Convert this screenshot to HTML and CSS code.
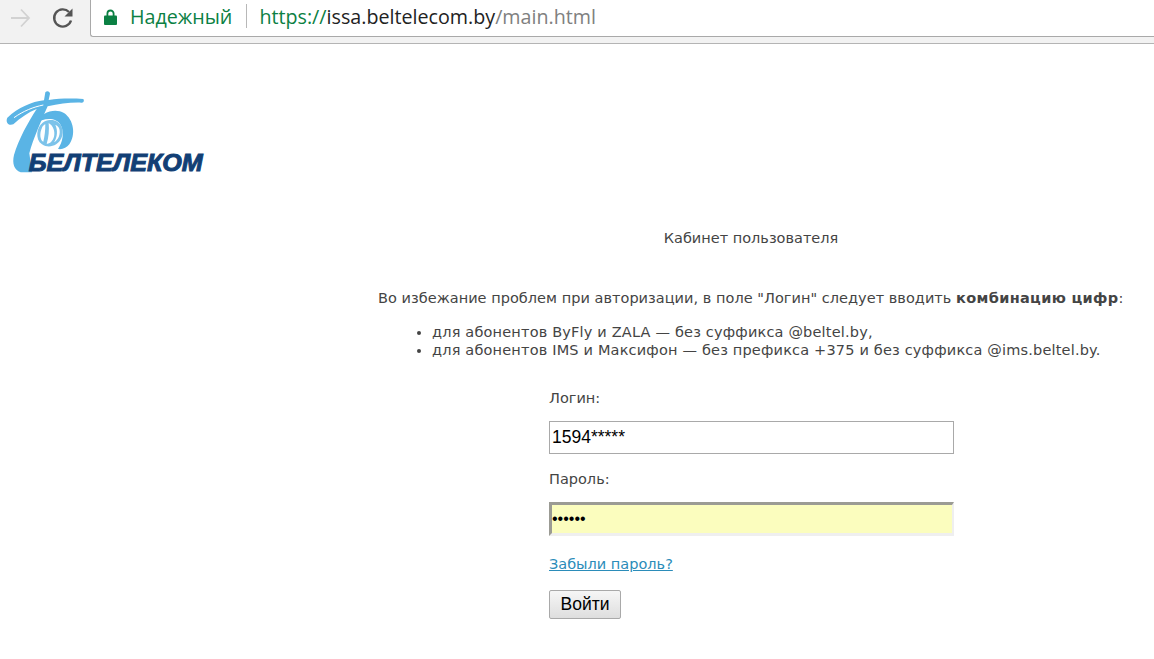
FILE: index.html
```html
<!DOCTYPE html>
<html lang="ru">
<head>
<meta charset="utf-8">
<title>Кабинет пользователя</title>
<link rel="stylesheet" href="styles.css">
</head>
<body>
<header class="toolbar">
  <div class="nav">
    <svg class="ico-forward" viewBox="0 0 24 24" width="24" height="24"><path d="M3 12H21M13 3.5L21 12L13 20.5" fill="none" stroke="#d2d2d2" stroke-width="1.8"/></svg>
    <svg class="ico-reload" viewBox="0 0 24 24" width="24" height="24"><path d="M20 14.5A8.6 8.6 0 1 1 18 6" fill="none" stroke="#555" stroke-width="2.4"/><path d="M21.5 2.5V10.5H13.5Z" fill="#555"/></svg>
  </div>
  <div class="omnibox">
    <svg class="ico-lock" viewBox="0 0 13 16" width="13" height="16"><path d="M3.4 8V4.6a3.1 3.1 0 0 1 6.2 0V8" fill="none" stroke="#0b8043" stroke-width="1.8"/><rect x="0" y="6.5" width="13" height="9.5" rx="1" fill="#0b8043"/></svg>
    <span class="secure">Надежный</span>
    <span class="sep"></span>
    <span class="url"><span class="scheme">https://</span><span class="host">issa.beltelecom.by</span><span class="path">/main.html</span></span>
  </div>
</header>

<div class="logo">
  <svg viewBox="0 0 645 300" width="215" height="100">
    <g fill="#5ab4e5">
      <path d="M22 98C55 68 95 50 132 46L136 22C140 16 150 18 150 26L146 45C180 40 215 40 250 42C254 48 250 54 244 53C210 52 178 56 143 64C125 105 100 160 88 205L96 262L62 262C42 255 36 235 42 210C55 165 85 110 110 72C85 82 62 98 40 118C24 124 16 110 22 98Z"/>
      <path d="M105 116C125 80 165 68 192 84C222 104 228 150 208 178C200 188 188 194 174 192C188 172 194 142 182 120C168 96 132 98 105 116Z"/>
    </g>
    <path fill="#7cc3ea" d="M150 105C182 103 196 135 184 160C174 182 146 192 126 178C104 162 110 126 128 113C135 108 142 106 150 105ZM126 128C118 145 120 165 130 170C134 155 136 135 136 118C131 120 128 124 126 128ZM146 114C148 135 146 158 140 176C150 176 158 168 162 155C166 140 160 122 146 114ZM166 120C174 135 172 158 162 172C176 165 182 145 178 132C176 126 172 122 166 120Z"/>
    <path d="M42 98C70 78 100 66 130 60" fill="none" stroke="#fff" stroke-width="3"/>
    <text class="logo-text" x="86" y="257" textLength="522" lengthAdjust="spacingAndGlyphs">БЕЛТЕЛЕКОМ</text>
  </svg>
</div>

<main class="content">
  <h1 class="title">Кабинет пользователя</h1>
  <p class="intro">Во избежание проблем при авторизации, в поле "Логин" следует вводить <b>комбинацию цифр</b>:</p>
  <ul class="notes">
    <li>для абонентов ByFly и ZALA — без суффикса @beltel.by,</li>
    <li>для абонентов IMS и Максифон — без префикса +375 и без суффикса @ims.beltel.by.</li>
  </ul>
  <form class="login">
    <label class="field-label" for="login">Логин:</label>
    <input class="input" id="login" type="text" value="1594*****">
    <label class="field-label" for="password">Пароль:</label>
    <input class="input input-filled" id="password" type="password" value="123456">
    <a class="forgot" href="#">Забыли пароль?</a>
    <button class="submit" type="button">Войти</button>
  </form>
</main>
</body>
</html>
```
FILE: styles.css
```css
html, body { margin: 0; padding: 0; background: #fff; }
body {
  width: 1154px;
  height: 659px;
  overflow: hidden;
  font-family: "DejaVu Sans", Verdana, sans-serif;
  font-size: 14.5px;
  color: #444;
}
.toolbar {
  display: flex;
  height: 43px;
  box-sizing: content-box;
  background: #f2f2f2;
  border-bottom: 1px solid #b4b4b4;
  align-items: flex-start;
}
.nav {
  width: 90px;
  height: 36px;
  flex: none;
  display: flex;
  align-items: center;
  gap: 19px;
  padding-left: 8px;
  box-sizing: border-box;
}
.omnibox {
  flex: 1;
  height: 37px;
  box-sizing: border-box;
  background: #fff;
  border: 1px solid #a9a9a9;
  border-top: 0;
  border-right: 0;
  border-bottom-left-radius: 3px;
  display: flex;
  align-items: center;
  padding: 0 0 4px 13px;
  font-family: "Open Sans", "Noto Sans", sans-serif;
  font-size: 19.7px;
  white-space: nowrap;
}
.secure { color: #0b8043; margin-left: 8px; }
.ico-lock { margin-top: 2px; margin-right: 5px; }
.sep { width: 1px; height: 24px; background: #b8b8b8; margin: 0 12px 0 14px; }
.scheme { color: #0b8043; }
.host { color: #222; }
.path { color: #808080; }
.logo { padding: 41px 0 0 0; height: 100px; }
.logo svg { display: block; }
.logo-text {
  font-family: "Liberation Sans", Arial, sans-serif;
  font-weight: 700;
  font-style: italic;
  font-size: 74px;
  fill: #123f75;
  stroke: #123f75;
  stroke-width: 3px;
}
.content { margin-left: 378px; width: 746px; }
.title {
  margin: 44px 0 0;
  font-size: inherit;
  font-weight: 400;
  text-align: center;
  line-height: 18px;
}
.intro { margin: 42px 0 0; line-height: 18px; white-space: nowrap; letter-spacing: 0.03px; }
.intro b { letter-spacing: 0.33px; }
.notes {
  margin: 16px 0 0;
  padding: 0 0 0 54px;
  line-height: 18px;
  white-space: nowrap;
  letter-spacing: 0.18px;
}
.login {
  display: flex;
  flex-direction: column;
  align-items: flex-start;
  margin: 30px 0 0 171px;
}
.field-label { line-height: 18px; }
.input {
  box-sizing: border-box;
  width: 405px;
  height: 33px;
  margin: 14px 0 16px;
  padding: 2px 2px;
  border: 1px solid #a9a9a9;
  background: #fff;
  color: #000;
  font-family: "Liberation Sans", Arial, sans-serif;
  font-size: 17.5px;
  outline: 0;
}
.input-filled {
  height: 34px;
  margin: 14px 0 19px;
  border-width: 3px 2px 3px 3px;
  border-style: solid;
  border-color: #9b9b94 #efefef #efefef #9b9b94;
  background: #fbfdbe;
  padding: 0;
  font-size: 16px;
}
.forgot { color: #2b8cb9; line-height: 18px; }
.submit {
  margin-top: 17px;
  width: 72px;
  height: 29px;
  padding: 0;
  border: 1px solid #a9a9a9;
  border-radius: 2px;
  background: linear-gradient(#f6f6f6, #dedede);
  color: #000;
  font-family: "Liberation Sans", Arial, sans-serif;
  font-size: 17.5px;
}
```
